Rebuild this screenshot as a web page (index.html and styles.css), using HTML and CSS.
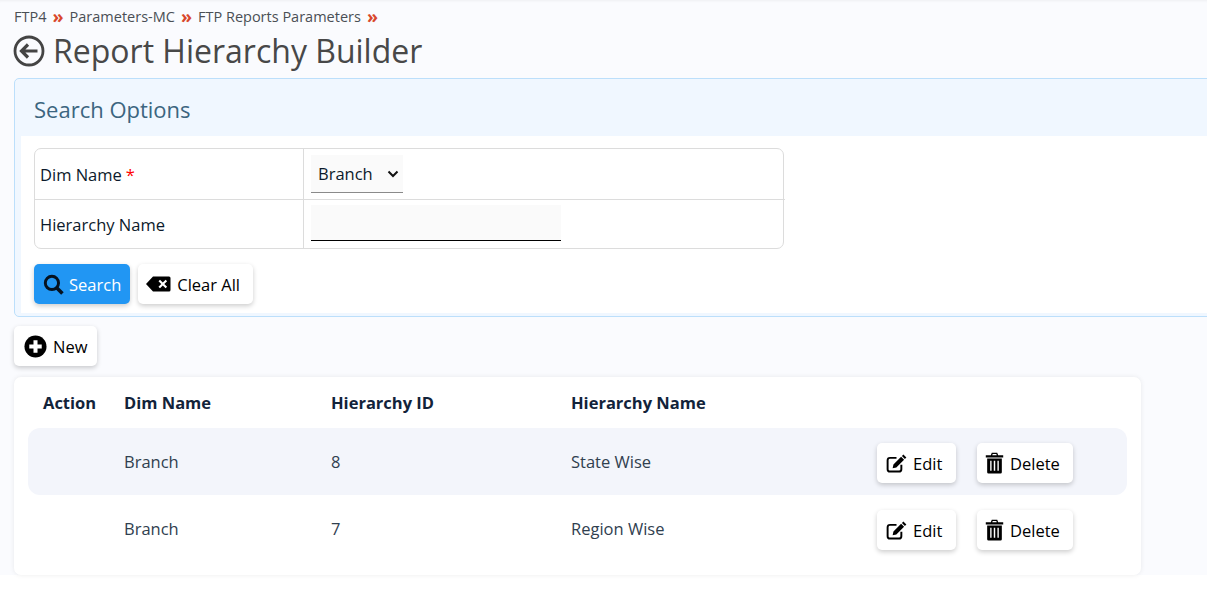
FILE: index.html
```html
<!DOCTYPE html>
<html lang="en">
<head>
<meta charset="utf-8">
<title>Report Hierarchy Builder</title>
<link rel="stylesheet" href="styles.css">
</head>
<body>
<main class="page">
  <nav class="crumbs">
    <span>FTP4</span><span class="sep">»</span>
    <span>Parameters-MC</span><span class="sep">»</span>
    <span>FTP Reports Parameters</span><span class="sep">»</span>
  </nav>
  <header class="title-row">
    <svg class="back" viewBox="0 0 32 32" aria-hidden="true"><circle cx="16" cy="16" r="14" fill="none" stroke="#444" stroke-width="2.8"/><path d="M24.5 16H9M15 9.5 8.5 16l6.500 6.500" fill="none" stroke="#444" stroke-width="3.200"/></svg>
    <h1>Report Hierarchy Builder</h1>
  </header>

  <section class="panel">
    <h2>Search Options</h2>
    <div class="panel-body">
      <div class="form-table">
        <div class="cell label first">Dim Name <span class="req">*</span></div>
        <div class="cell field first">
          <div class="select"><span>Branch</span>
            <svg viewBox="0 0 12 8" aria-hidden="true"><path d="M1.500 1.500 6 6l4.500-4.500" fill="none" stroke="#111" stroke-width="2"/></svg>
          </div>
        </div>
        <div class="cell label">Hierarchy Name</div>
        <div class="cell field"><div class="input"></div></div>
      </div>
      <div class="actions">
        <button class="btn primary">
          <svg class="ico" viewBox="0 0 20 20" aria-hidden="true"><circle cx="8.500" cy="8.500" r="6.300" fill="none" stroke="#06121f" stroke-width="2.800"/><path d="M13 13l5.500 5.500" stroke="#06121f" stroke-width="3.400"/></svg>
          Search
        </button>
        <button class="btn">
          <svg class="ico wide" viewBox="0 0 25 16" aria-hidden="true"><path fill="#000" fill-rule="evenodd" d="M7 .5h16a1.500 1.500 0 0 1 1.500 1.500v12a1.500 1.500 0 0 1-1.500 1.500H7L0 8zM12.500 5.200l2.800 2.800-2.800 2.800 1.500 1.500 2.800-2.800 2.800 2.800 1.500-1.500L18.300 8l2.800-2.800-1.500-1.500L16.800 6.500 14 3.700z"/></svg>
          Clear All
        </button>
      </div>
    </div>
  </section>

  <div class="new-row">
    <button class="btn">
      <svg class="ico" viewBox="0 0 24 24" aria-hidden="true"><circle cx="12" cy="12" r="11.500" fill="#000"/><path d="M12 5.500v13M5.500 12h13" stroke="#fff" stroke-width="4.200"/></svg>
      New
    </button>
  </div>

  <section class="card">
    <div class="row head">
      <div>Action</div><div>Dim Name</div><div>Hierarchy ID</div><div>Hierarchy Name</div><div></div>
    </div>
    <div class="row shaded">
      <div></div><div>Branch</div><div>8</div><div>State Wise</div>
      <div class="row-actions">
        <button class="btn">
          <svg class="ico" viewBox="0 0 26 24" aria-hidden="true"><path d="M19 13.500V19a3 3 0 0 1-3 3H5a3 3 0 0 1-3-3V8a3 3 0 0 1 3-3h8" fill="none" stroke="#000" stroke-width="2.400"/><path fill="#000" d="M21.500 .8l3.700 3.700-1.800 1.800-3.700-3.700zM18.700 3.600l3.700 3.700L12.800 17l-4.600 1 1-4.700z"/></svg>
          Edit
        </button>
        <button class="btn">
          <svg class="ico trash" viewBox="0 0 20 24" aria-hidden="true"><path fill="#000" d="M7 .8h6l1 2.700h5.500v2.400H.5V3.500H6zM8 2.200l-.4 1.300h4.800L12 2.200z"/><path fill="#000" fill-rule="evenodd" d="M2 7h16v15a1.500 1.500 0 0 1-1.500 1.500h-13A1.500 1.500 0 0 1 2 22zM5.300 9.500v11h1.500v-11zM9.200 9.500v11h1.600v-11zM13.200 9.500v11h1.500v-11z"/></svg>
          Delete
        </button>
      </div>
    </div>
    <div class="row">
      <div></div><div>Branch</div><div>7</div><div>Region Wise</div>
      <div class="row-actions">
        <button class="btn">
          <svg class="ico" viewBox="0 0 26 24" aria-hidden="true"><path d="M19 13.500V19a3 3 0 0 1-3 3H5a3 3 0 0 1-3-3V8a3 3 0 0 1 3-3h8" fill="none" stroke="#000" stroke-width="2.400"/><path fill="#000" d="M21.500 .8l3.700 3.700-1.800 1.800-3.700-3.700zM18.700 3.600l3.700 3.700L12.800 17l-4.600 1 1-4.700z"/></svg>
          Edit
        </button>
        <button class="btn">
          <svg class="ico trash" viewBox="0 0 20 24" aria-hidden="true"><path fill="#000" d="M7 .8h6l1 2.700h5.500v2.400H.5V3.500H6zM8 2.200l-.4 1.300h4.800L12 2.200z"/><path fill="#000" fill-rule="evenodd" d="M2 7h16v15a1.500 1.500 0 0 1-1.500 1.500h-13A1.500 1.500 0 0 1 2 22zM5.300 9.500v11h1.500v-11zM9.200 9.500v11h1.600v-11zM13.200 9.500v11h1.500v-11z"/></svg>
          Delete
        </button>
      </div>
    </div>
  </section>
</main>
</body>
</html>
```
FILE: styles.css
```css
* { box-sizing: border-box; }
html, body { margin: 0; height: 100%; background: #fff; overflow: hidden; }
body { font-family: "Open Sans", sans-serif; color: #0c1a2b; }

.page {
  height: 575px;
  background: #fafbfe;
  padding: 7px 0 0 14px;
  box-shadow: inset 0 3px 3px -2px rgba(0,0,0,.05);
}

.crumbs { display: flex; align-items: center; gap: 6px; height: 20px; font-size: 14.500px; color: #4a4f55; line-height: 20px; }
.sep { color: #d9472b; font-weight: 700; font-size: 18px; line-height: 18px; position: relative; top: -1px; }

.title-row { display: flex; align-items: center; gap: 8px; height: 44px; margin-top: 2px; margin-bottom: 5px; }
.back { width: 32px; height: 32px; margin-left: -1px; }
h1 { margin: 0; font-size: 32px; font-weight: 400; color: #484848; line-height: 44px; }

.panel {
  margin-right: -10px;
  border: 1px solid #bcdffb;
  border-radius: 5px;
  background: #f0f7ff;
  padding: 0 0 4px 6px;
  height: 239px;
}
.panel h2 {
  margin: 0 0 0 13px;
  height: 57px;
  font-size: 22px;
  font-weight: 400;
  line-height: 60px;
  color: #3c6580;
}
.panel-body { background: #fff; height: 177px; padding: 12px 0 0 13px; }

.form-table {
  display: grid;
  grid-template-columns: 269px 481px;
  width: 750px;
  border: 1px solid #dcdcdc;
  border-radius: 7px;
  font-size: 16.500px;
  color: #0c1a2b;
}
.cell { display: flex; align-items: center; }
.label { padding-left: 5px; border-right: 1px solid #dcdcdc; }
.field { padding-left: 7px; }
.first { height: 51px; border-bottom: 1px solid #dcdcdc; }
.cell:not(.first) { height: 48px; }
.req { color: #f00; margin-left: 4px; }

.select {
  display: flex; align-items: center; justify-content: space-between;
  width: 92px; height: 38px; padding: 0 4px 0 7px;
  background: #fafafa; border-bottom: 1px solid #8a8a8a;
}
.select svg { width: 12px; height: 8px; }
.input { width: 250px; height: 36px; background: #fafafa; border-bottom: 1px solid #000; margin-top: -2px; }

.actions { display: flex; gap: 8px; margin-top: 15px; }

.btn {
  display: inline-flex; align-items: center; gap: 6px;
  height: 40px; padding: 0 13px 0 9px;
  border: 0; border-radius: 5px;
  background: #fff; color: #000;
  font-family: inherit; font-size: 16.500px;
  box-shadow: 0 2px 5px rgba(0,0,0,.2);
}
.btn.primary { background: #2196f3; color: #fff; font-weight: 500; padding-right: 9px; gap: 5px; }
.ico { width: 21px; height: 21px; flex: none; }
.ico.wide { width: 25px; height: 16px; margin-left: -1px; }
.ico.trash { width: 19px; height: 22px; }
.btn:has(.trash) { padding-right: 9px; padding-left: 8px; }

.new-row { margin-top: 9px; }
.new-row .btn { width: 83px; }
.new-row .ico { width: 23px; height: 23px; margin-left: 1px; }

.card {
  width: 1127px; height: 198px; margin-top: 11px;
  background: #fff; border-radius: 7px;
  padding: 0 14px;
  box-shadow: 0 0 5px rgba(0,0,0,.08);
}
.row {
  display: grid;
  grid-template-columns: 96px 207px 240px 306px 250px;
  align-items: center;
  height: 67px;
  font-size: 16.500px;
  color: #30404f;
}
.row > div:first-child { padding-left: 15px; }
.row.head { height: 51px; font-weight: 700; color: #12233a; }
.row.shaded { background: #f3f5fb; border-radius: 12px; }
.row-actions { display: flex; gap: 21px; margin-top: 3px; }
.row-actions .btn { width: 79px; }
.row-actions .btn:has(.trash) { width: 96px; }
```
